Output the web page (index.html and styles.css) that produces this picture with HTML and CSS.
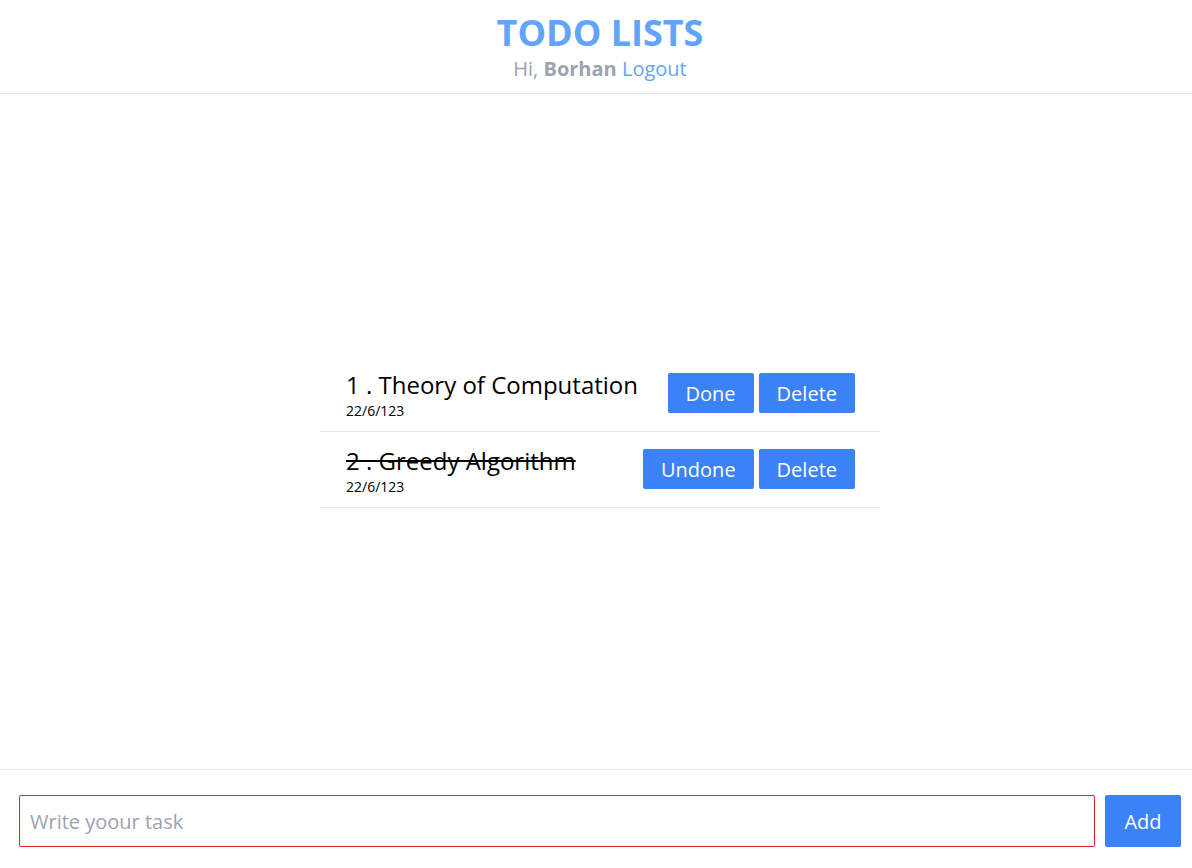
FILE: index.html
```html
<!DOCTYPE html>
<html>

<head>
    <meta charset="UTF-8">
    <title>Todo Lists</title>
    <link rel="stylesheet" href="styles.css">
</head>

<body>
    <div class="app">
        <header class="top">
            <h1 class="title">TODO LISTS</h1>
            <p class="greet">Hi, <b>Borhan</b> <a href="#" class="logout">Logout</a></p>
        </header>

        <main class="content">
            <ul class="todos">
                <li class="todo">
                    <div class="info">
                        <h3 class="name">1 . Theory of Computation</h3>
                        <small class="date">22/6/123</small>
                    </div>
                    <div class="actions">
                        <button class="btn">Done</button>
                        <button class="btn">Delete</button>
                    </div>
                </li>
                <li class="todo">
                    <div class="info">
                        <h3 class="name done">2 . Greedy Algorithm</h3>
                        <small class="date">22/6/123</small>
                    </div>
                    <div class="actions">
                        <button class="btn">Undone</button>
                        <button class="btn">Delete</button>
                    </div>
                </li>
            </ul>
        </main>

        <form class="bottom">
            <input type="text" class="task" placeholder="Write yoour task">
            <button type="button" class="btn add">Add</button>
        </form>
    </div>
</body>

</html>
```

FILE: styles.css
```css
* {
    box-sizing: border-box;
    font-family: 'Open Sans', 'Noto Sans', sans-serif;
}

body {
    margin: 0;
    background: white;
    overflow: hidden;
}

.app {
    width: 1200px;
    height: 868px;
    display: flex;
    flex-direction: column;
}

.top {
    text-align: center;
    border-bottom: 1px solid #e5e7eb;
    padding: 10px 0 11px;
}

.title {
    margin: 0;
    font-size: 36px;
    line-height: 46px;
    font-weight: 700;
    color: #60a5fa;
}

.greet {
    margin: 0;
    font-size: 20px;
    line-height: 26px;
    color: #9ca3af;
}

.logout {
    color: #60a5fa;
    text-decoration: none;
}

.content {
    flex: 1;
    display: flex;
    align-items: center;
    justify-content: center;
}

.todos {
    list-style: none;
    margin: 0;
    padding: 0;
    width: 560px;
}

.todo {
    display: flex;
    align-items: center;
    justify-content: space-between;
    height: 76px;
    padding: 0 25px 0 26px;
    border-bottom: 1px solid #e5e7eb;
}

.name {
    margin: 0;
    font-size: 24px;
    line-height: 34px;
    font-weight: 400;
    color: black;
}

.done {
    text-decoration: line-through;
}

.date {
    display: block;
    font-size: 14px;
    line-height: 17px;
    color: black;
}

.actions {
    display: flex;
    gap: 5px;
}

.btn {
    background: #3b82f6;
    color: white;
    border: none;
    border-radius: 2px;
    font-size: 20px;
    height: 40px;
    padding: 0 18px;
    cursor: pointer;
}

.bottom {
    border-top: 1px solid #e5e7eb;
    display: flex;
    gap: 10px;
    padding: 25px 19px 21px;
    margin: 0;
}

.task {
    flex: 1;
    height: 52px;
    border: 1px solid #dc2626;
    border-radius: 2px;
    padding: 0 10px;
    font-size: 20px;
    outline: none;
}

.task::placeholder {
    color: #9ca3af;
}

.add {
    height: 52px;
    width: 76px;
    padding: 0;
}
```
